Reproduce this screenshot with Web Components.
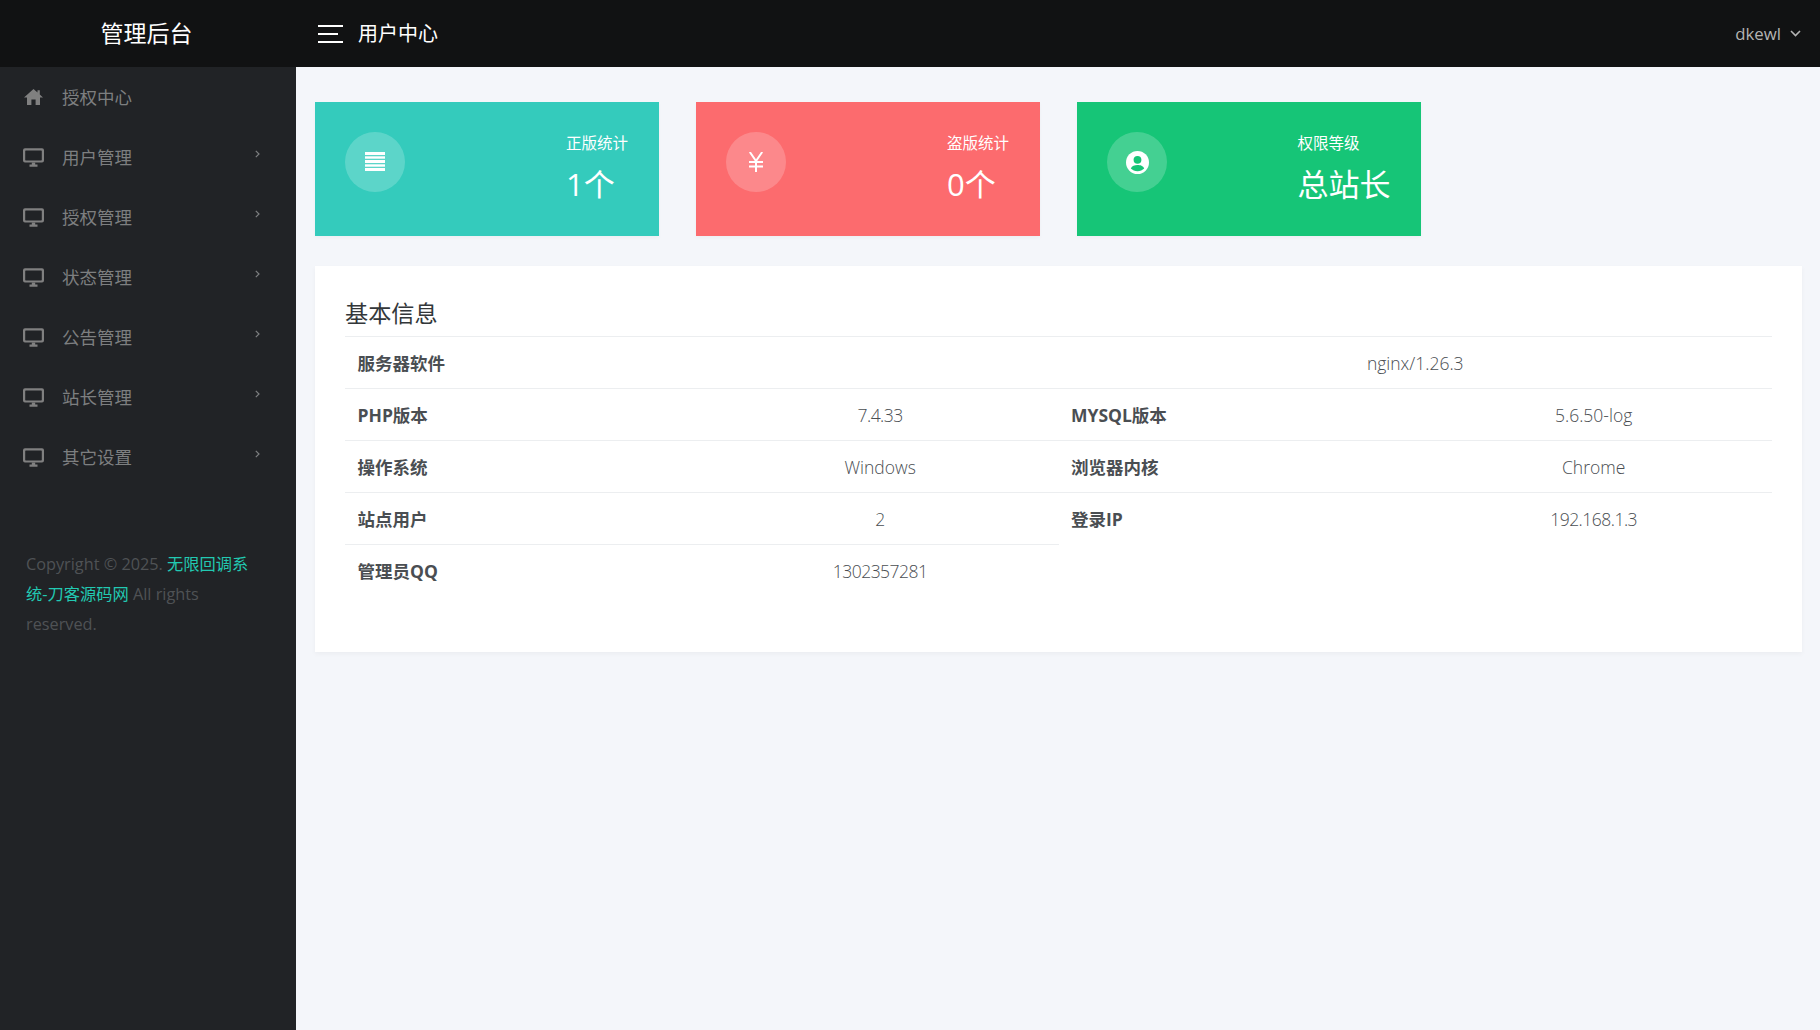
<!DOCTYPE html>
<html lang="zh">
<head>
<meta charset="utf-8">
<title>用户中心</title>
<style>
  html, body { margin: 0; height: 100%; }
  body {
    font-family: "Open Sans", "Noto Sans CJK SC", sans-serif;
    background: #f4f6fa;
  }
  side-nav a { color: #22c9b2; }
</style>
</head>
<body>
<admin-app>
  <top-bar slot="top" brand="管理后台" crumb="用户中心" user="dkewl"></top-bar>
  <side-nav slot="side">
    <nav-item icon="home" label="授权中心"></nav-item>
    <nav-item icon="monitor" label="用户管理" more></nav-item>
    <nav-item icon="monitor" label="授权管理" more></nav-item>
    <nav-item icon="monitor" label="状态管理" more></nav-item>
    <nav-item icon="monitor" label="公告管理" more></nav-item>
    <nav-item icon="monitor" label="站长管理" more></nav-item>
    <nav-item icon="monitor" label="其它设置" more></nav-item>
    <span slot="foot">Copyright © 2025. <a>无限回调系统-刀客源码网</a> All rights reserved.</span>
  </side-nav>
  <stat-card icon="list" label="正版统计" value="1个" color="#34cbbc"></stat-card>
  <stat-card icon="yen" label="盗版统计" value="0个" color="#fc6b6e"></stat-card>
  <stat-card icon="user" label="权限等级" value="总站长" color="#16c577"></stat-card>
  <info-panel slot="panel" heading="基本信息"></info-panel>
</admin-app>

<script>
'use strict';

const ICONS = {
  home: '<path d="M10.5 2 L14.5 5.4 V3.2 H16.8 V7.4 L20 10.5 H17 V18 H12.6 V12.6 H8.4 V18 H4 V10.5 H1 Z"/>',
  monitor: '<path fill-rule="evenodd" d="M2 1.3 H19 Q21 1.3 21 3.3 V13.5 Q21 15.5 19 15.5 H2 Q0 15.5 0 13.5 V3.3 Q0 1.3 2 1.3 Z M2.8 3.4 Q2.2 3.4 2.2 4 V12.8 Q2.2 13.4 2.8 13.4 H18.2 Q18.8 13.4 18.8 12.8 V4 Q18.8 3.4 18.2 3.4 Z"/><path d="M8.8 15.5 H12.2 V17.4 H14.5 V19.7 H6.5 V17.4 H8.8 Z"/>'
};

class AdminApp extends HTMLElement {
  constructor() {
    super();
    this.attachShadow({mode: 'open'}).innerHTML = `<style>
        :host {
          display: grid;
          grid-template-columns: 296px 1fr;
          grid-template-rows: 67px 1fr;
          height: 1030px;
          overflow: hidden;
        }
        .top { grid-column: 1 / 3; }
        main { padding: 35px 18px 0 19px; }
        .cards {
          display: flex;
          gap: 37px;
          margin-bottom: 30px;
        }
      </style>
      <div class="top"><slot name="top"></slot></div>
      <slot name="side"></slot>
      <main>
        <div class="cards"><slot></slot></div>
        <slot name="panel"></slot>
      </main>`;
  }
}
customElements.define('admin-app', AdminApp);

class TopBar extends HTMLElement {
  constructor() {
    super();
    this.attachShadow({mode: 'open'});
  }
  connectedCallback() {
    this.shadowRoot.innerHTML = `<style>
        :host {
          display: flex;
          align-items: center;
          height: 67px;
          background: #111213;
          color: #fff;
        }
        .brand {
          width: 296px;
          padding: 0 3px 4px 0;
          box-sizing: border-box;
          text-align: center;
          font-size: 23px;
        }
        .toggle { margin: 0 15px 0 22px; display: block; }
        .crumb { font-size: 20px; padding-bottom: 2px; }
        .user {
          margin-left: auto;
          margin-right: 19px;
          display: flex;
          align-items: center;
          gap: 9px;
          font-size: 16.8px;
          color: #b4b4b4;
        }
      </style>
      <div class="brand">${this.getAttribute('brand')}</div>
      <svg class="toggle" width="25" height="18" viewBox="0 0 25 18" fill="#fff">
        <rect y="0" width="25" height="2"/><rect y="8" width="20" height="2"/><rect y="16" width="25" height="2"/>
      </svg>
      <div class="crumb">${this.getAttribute('crumb')}</div>
      <div class="user">${this.getAttribute('user')}
        <svg width="11" height="7" viewBox="0 0 11 7" fill="none" stroke="#b4b4b4" stroke-width="1.6"><path d="M1 1 L5.5 5.5 L10 1"/></svg>
      </div>`;
  }
}
customElements.define('top-bar', TopBar);

class SideNav extends HTMLElement {
  constructor() {
    super();
    this.attachShadow({mode: 'open'}).innerHTML = `<style>
        :host {
          display: block;
          background: #212326;
        }
        .foot {
          padding: 0 34px 0 26px;
          margin-top: 62px;
          font-size: 16.25px;
          line-height: 30px;
          color: #4f5255;
        }
        ::slotted(span) { display: block; }
      </style>
      <slot></slot>
      <div class="foot"><slot name="foot"></slot></div>`;
  }
}
customElements.define('side-nav', SideNav);

class NavItem extends HTMLElement {
  constructor() {
    super();
    this.attachShadow({mode: 'open'});
  }
  connectedCallback() {
    let more = this.hasAttribute('more') ? `<svg class="more" width="5" height="8" viewBox="0 0 5 8" fill="none" stroke="#7d7f80" stroke-width="1.2"><path d="M.8 .8 L4 4 L.8 7.2"/></svg>` : '';
    this.shadowRoot.innerHTML = `<style>
        :host {
          display: flex;
          align-items: center;
          height: 60px;
          padding-left: 23px;
          color: #7d7f80;
          font-size: 17.5px;
          position: relative;
        }
        svg.icon { width: 21px; height: 20px; fill: #808080; flex: none; margin-right: 18px; }
        span { padding-bottom: 2px; }
        .more { position: absolute; left: 255px; top: 23px; }
      </style>
      <svg class="icon" viewBox="0 0 21 20">${ICONS[this.getAttribute('icon')]}</svg>
      <span>${this.getAttribute('label')}</span>${more}`;
  }
}
customElements.define('nav-item', NavItem);

class StatCard extends HTMLElement {
  constructor() {
    super();
    this.attachShadow({mode: 'open'});
  }
  glyph() {
    let color = this.getAttribute('color');
    switch (this.getAttribute('icon')) {
      case 'list':
        return `<svg width="20" height="20" viewBox="0 0 20 20" fill="#fff"><rect y="0" width="20" height="3"/><rect y="4.3" width="20" height="2.4"/><rect y="8" width="20" height="3"/><rect y="12.3" width="20" height="2.4"/><rect y="16" width="20" height="3" /></svg>`;
      case 'yen':
        return `<svg width="20" height="20" viewBox="0 0 20 20" fill="none" stroke="#fff" stroke-width="2"><path d="M3.8 0 L10 9 L16.2 0 M10 9 V20 M3 10 H17 M3 14.5 H17"/></svg>`;
      default:
        return `<svg width="23" height="23" viewBox="0 0 23 23"><circle cx="11.5" cy="11.5" r="11.5" fill="#fff"/><circle cx="11.5" cy="8.8" r="3.9" fill="${color}"/><path d="M4.8 17.6 C6 14.6 8.5 14 11.5 14 C14.5 14 17 14.6 18.2 17.6 C16.5 19.3 14.2 20.2 11.5 20.2 C8.8 20.2 6.5 19.3 4.8 17.6 Z" fill="${color}"/></svg>`;
    }
  }
  connectedCallback() {
    this.shadowRoot.innerHTML = `<style>
        :host {
          display: flex;
          justify-content: space-between;
          align-items: flex-start;
          box-sizing: border-box;
          width: 344px;
          height: 134px;
          padding: 0 31px 0 30px;
          background: ${this.getAttribute('color')};
          color: #fff;
          box-shadow: 0 2px 4px rgba(0, 0, 0, .03);
        }
        .dot {
          width: 60px;
          height: 60px;
          margin-top: 30px;
          border-radius: 50%;
          background: rgba(255, 255, 255, .2);
          display: flex;
          align-items: center;
          justify-content: center;
        }
        .text { margin-top: 27.5px; }
        .label { font-size: 15.5px; line-height: 26px; margin-bottom: 5px; }
        .value { font-size: 31px; line-height: 46px; margin-right: -.5px; }
      </style>
      <div class="dot">${this.glyph()}</div>
      <div class="text">
        <div class="label">${this.getAttribute('label')}</div>
        <div class="value">${this.getAttribute('value')}</div>
      </div>`;
  }
}
customElements.define('stat-card', StatCard);

class InfoPanel extends HTMLElement {
  constructor() {
    super();
    this.attachShadow({mode: 'open'});
  }
  connectedCallback() {
    this.shadowRoot.innerHTML = `<style>
        :host {
          display: block;
          box-sizing: border-box;
          height: 386px;
          padding: 30px;
          background: #fff;
          box-shadow: 0 2px 5px rgba(0, 0, 0, .04);
          color: #4a4e52;
        }
        h3 {
          margin: 0;
          padding-bottom: 6px;
          font-size: 23.2px;
          font-weight: 400;
          line-height: 34px;
          color: #33373a;
        }
        table {
          width: 100%;
          table-layout: fixed;
          border-collapse: collapse;
          font-size: 17.5px;
          line-height: 26px;
        }
        td {
          padding: 12.5px;
          border-top: 1.25px solid #eceef0;
          text-align: center;
          font-weight: 300;
        }
        td.key {
          text-align: left;
          font-weight: 700;
        }
        td.num { letter-spacing: -.5px; }
      </style>
      <h3>${this.getAttribute('heading')}</h3>
      <table>
        <colgroup><col><col><col><col></colgroup>
        <tr><td class="key" colspan="2">服务器软件</td><td colspan="2">nginx/1.26.3</td></tr>
        <tr><td class="key">PHP版本</td><td class="num">7.4.33</td><td class="key">MYSQL版本</td><td>5.6.50-log</td></tr>
        <tr><td class="key">操作系统</td><td>Windows</td><td class="key">浏览器内核</td><td>Chrome</td></tr>
        <tr><td class="key">站点用户</td><td>2</td><td class="key">登录IP</td><td class="num">192.168.1.3</td></tr>
        <tr><td class="key">管理员QQ</td><td class="num">1302357281</td></tr>
      </table>`;
  }
}
customElements.define('info-panel', InfoPanel);
</script>
</body>
</html>
